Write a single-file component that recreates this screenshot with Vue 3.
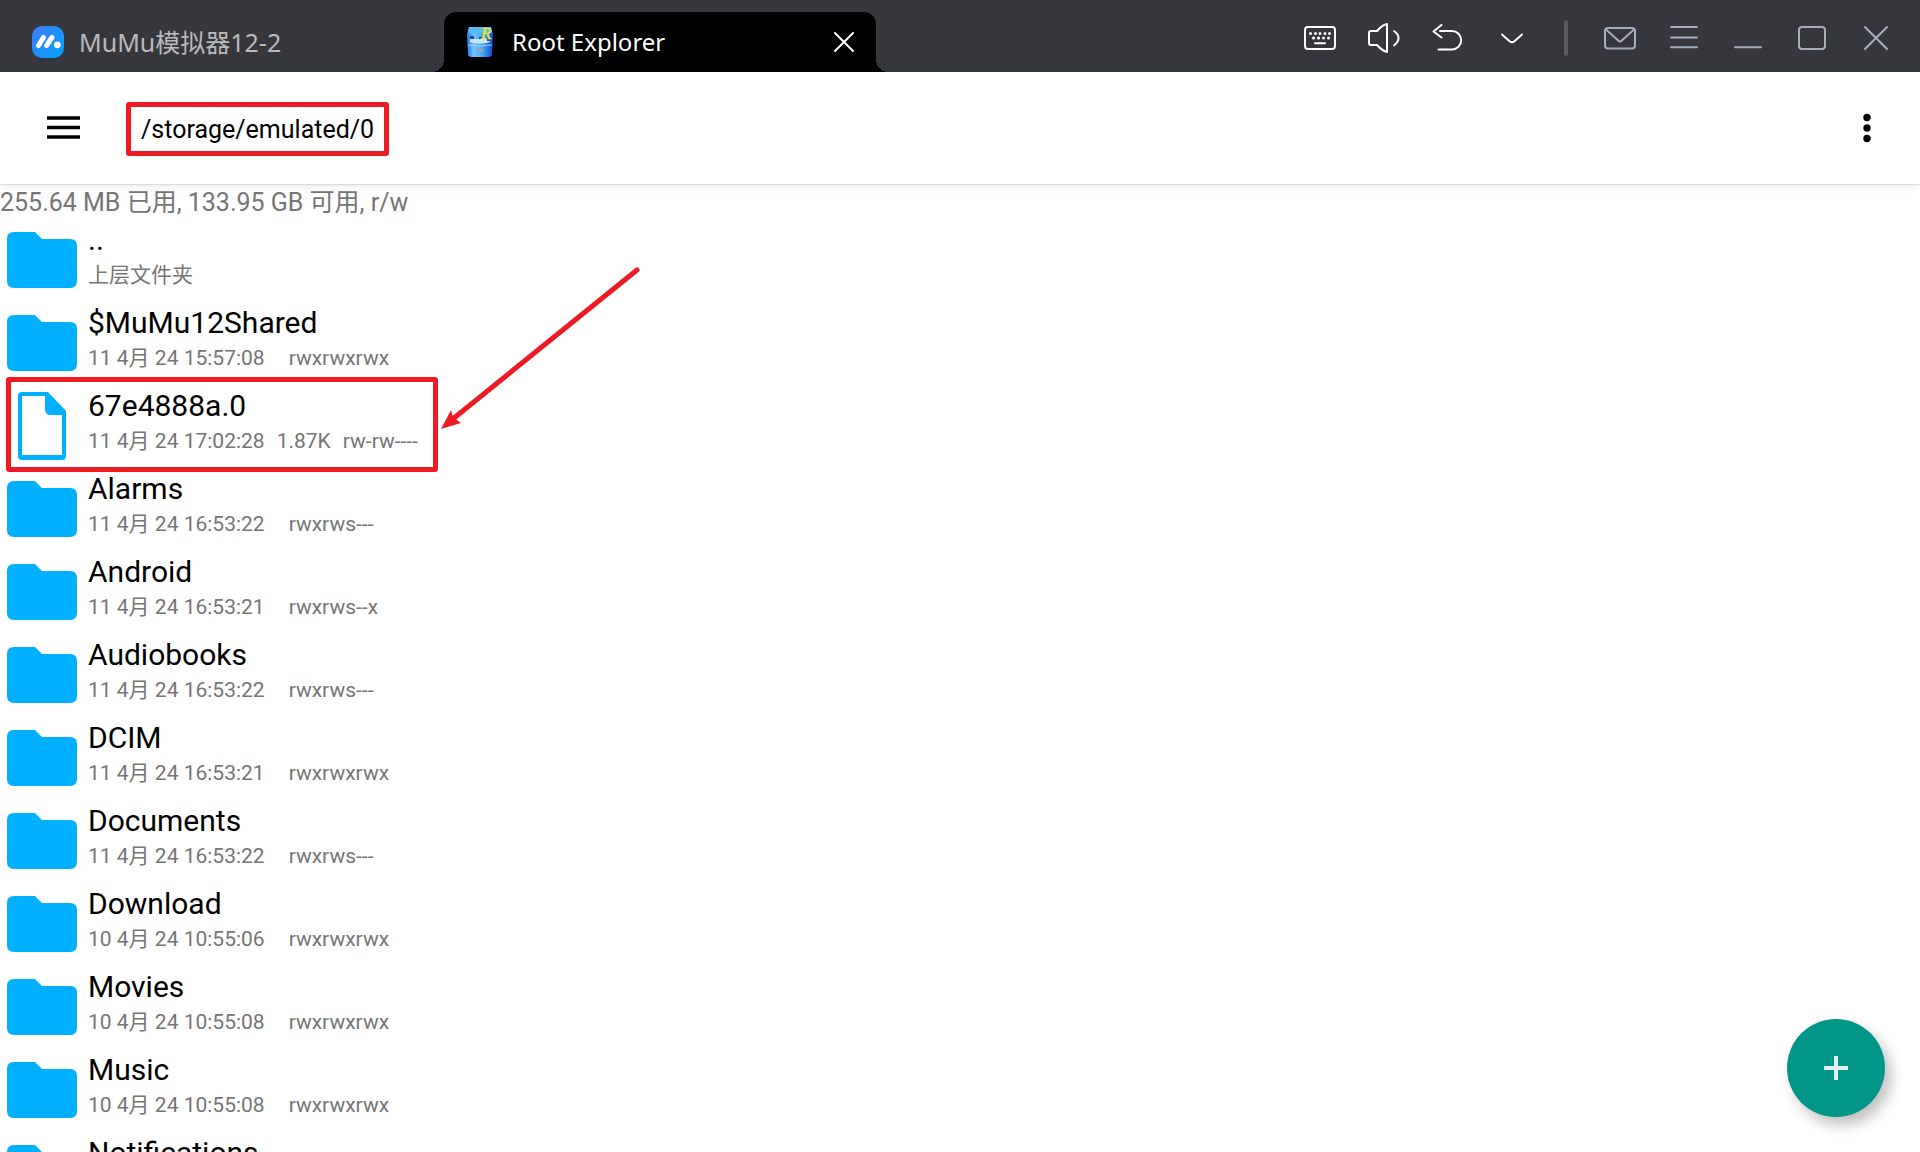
<script setup>
const entries = [
  { name: '..', note: '上层文件夹' },
  { name: '$MuMu12Shared', date: '11 4月 24 15:57:08', mode: 'rwxrwxrwx' },
  { name: '67e4888a.0', date: '11 4月 24 17:02:28', size: '1.87K', mode: 'rw-rw----', file: true },
  { name: 'Alarms', date: '11 4月 24 16:53:22', mode: 'rwxrws---' },
  { name: 'Android', date: '11 4月 24 16:53:21', mode: 'rwxrws--x' },
  { name: 'Audiobooks', date: '11 4月 24 16:53:22', mode: 'rwxrws---' },
  { name: 'DCIM', date: '11 4月 24 16:53:21', mode: 'rwxrwxrwx' },
  { name: 'Documents', date: '11 4月 24 16:53:22', mode: 'rwxrws---' },
  { name: 'Download', date: '10 4月 24 10:55:06', mode: 'rwxrwxrwx' },
  { name: 'Movies', date: '10 4月 24 10:55:08', mode: 'rwxrwxrwx' },
  { name: 'Music', date: '10 4月 24 10:55:08', mode: 'rwxrwxrwx' },
  { name: 'Notifications', date: '10 4月 24 10:55:08', mode: 'rwxrwxrwx' },
]
</script>

<template>
  <div class="window">
    <header class="titlebar">
      <div class="home">
        <svg class="logo" viewBox="0 0 32 32" aria-hidden="true">
          <defs>
            <linearGradient id="logoFill" x1="0" y1="0" x2="1" y2="1">
              <stop offset="0" stop-color="#3f7bff" />
              <stop offset="1" stop-color="#00a2ff" />
            </linearGradient>
          </defs>
          <rect width="32" height="32" rx="10" fill="url(#logoFill)" />
          <path d="M6.500 19.500 L11.500 11.500 M14.500 19.500 L20 11.500" stroke="#fff" stroke-width="5" stroke-linecap="round" />
          <circle cx="25.300" cy="18.800" r="3.400" fill="#fff" />
        </svg>
        <span>MuMu模拟器12-2</span>
      </div>

      <div class="tab">
        <svg class="tab-icon" viewBox="0 0 26 32" aria-hidden="true">
          <defs>
            <linearGradient id="cabinet" x1="0" y1="0" x2="1" y2="0">
              <stop offset="0" stop-color="#1c79e6" />
              <stop offset="0.250" stop-color="#74c4ff" />
              <stop offset="0.600" stop-color="#4aa6f8" />
              <stop offset="1" stop-color="#0a48cf" />
            </linearGradient>
          </defs>
          <path d="M2 1 H24 L26 8 L25 29 Q24 31 20 31 H6 Q2 31 1 29 L0 8 Z" fill="url(#cabinet)" />
          <path d="M2 1 H24 L25 7 H1 Z" fill="#58bdf6" />
          <path d="M3 13 H23 V16 Q13 19 3 16 Z" fill="#c9e6fd" />
          <path d="M3 10 H7 V13 H3 Z M12 11 H16 V13 H12 Z M20 13 H24 V15 H20 Z" fill="#17508f" />
          <path d="M1 19 Q13 21 25 19" stroke="#9ad3ff" stroke-width="1" fill="none" />
          <path d="M11 23 H16 V25 Q13 27 11 25 Z" fill="#a3a3ad" />
          <text x="14" y="13" font-family="Liberation Serif, serif" font-style="italic" font-size="17" fill="#e8e52a" stroke="#e8e52a" stroke-width="0.500">R</text>
        </svg>
        <span class="tab-name">Root Explorer</span>
        <button class="tab-close" aria-label="Close tab">
          <svg viewBox="0 0 20 20"><path d="M1 1 L19 19 M19 1 L1 19" /></svg>
        </button>
      </div>

      <nav class="tools" aria-label="Emulator tools">
        <button aria-label="Keyboard">
          <svg viewBox="0 0 40 40">
            <rect x="5" y="9" width="30" height="22" rx="3" />
            <path class="dots" d="M10.500 15.500h.01M15.500 15.500h.01M20 15.500h.01M25 15.500h.01M29.500 15.500h.01M13.500 20h.01M18.500 20h.01M23.500 20h.01M28.500 20h.01" />
            <path d="M15 25.200 H25" />
          </svg>
        </button>
        <button aria-label="Volume">
          <svg viewBox="0 0 40 40">
            <path d="M23 6 C18 7 15 11 13 13 H7 Q5 13 5 15 V25 Q5 27 7 27 H13 C15 29 18 33 23 34 Z" />
            <path d="M30 13 C36 17 36 23 30 27.500" />
          </svg>
        </button>
        <button aria-label="Back">
          <svg viewBox="0 0 40 40">
            <path d="M13.500 7 L5.500 13.500 L13.500 19.500 M12 13 H24 A9.200 9.200 0 0 1 24 31.400 H10.500" />
          </svg>
        </button>
        <button aria-label="More tools">
          <svg viewBox="0 0 40 40"><path d="M10 16.500 L17.500 23.300 Q20 25.200 22.500 23.300 L30 16.500" /></svg>
        </button>
      </nav>
      <span class="divider"></span>
      <nav class="tools muted" aria-label="Window controls">
        <button aria-label="Messages">
          <svg viewBox="0 0 40 40">
            <rect x="5" y="10" width="30" height="20.500" rx="3" />
            <path d="M6 11.500 L18.500 22.800 Q20 24 21.500 22.800 L34 11.500" />
          </svg>
        </button>
        <button aria-label="Menu">
          <svg viewBox="0 0 40 40"><path d="M7 9 H33 M7 19.500 H33 M7 29.300 H33" /></svg>
        </button>
        <button aria-label="Minimize">
          <svg viewBox="0 0 40 40"><path d="M7 29.300 H33" /></svg>
        </button>
        <button aria-label="Maximize">
          <svg viewBox="0 0 40 40"><rect x="7" y="9" width="26" height="22" rx="3" /></svg>
        </button>
        <button aria-label="Close">
          <svg viewBox="0 0 40 40"><path d="M9 9 L31 31 M31 9 L9 31" /></svg>
        </button>
      </nav>
    </header>

    <div class="appbar">
      <button class="drawer" aria-label="Open navigation">
        <svg viewBox="0 0 33 24"><path d="M0 2 H33 M0 11.500 H33 M0 21 H33" stroke="#000" stroke-width="3.500" /></svg>
      </button>
      <span class="path">/storage/emulated/0</span>
      <button class="overflow" aria-label="More options">
        <svg viewBox="0 0 8 30"><circle cx="4" cy="4.500" r="3.700" /><circle cx="4" cy="15" r="3.700" /><circle cx="4" cy="25.500" r="3.700" /></svg>
      </button>
    </div>

    <main class="browser">
      <p class="usage">255.64 MB 已用, 133.95 GB 可用, r/w</p>
      <ul class="entries">
        <li v-for="entry in entries" :key="entry.name" class="entry">
          <svg v-if="entry.file" class="icon" viewBox="0 0 84 84" aria-hidden="true">
            <path d="M22 8 H48 L66 27 V72 Q66 76 62 76 H22 Q18 76 18 72 V12 Q18 8 22 8 Z" fill="#00b0ff" />
            <path d="M22 12 H45 V25 Q45 31 51 31 H62 V71 H22 Z" fill="#fff" />
          </svg>
          <svg v-else class="icon" viewBox="0 0 84 84" aria-hidden="true">
            <path d="M14 14 H35 L42 21 H70 Q77 21 77 28 V63 Q77 70 70 70 H14 Q7 70 7 63 V21 Q7 14 14 14 Z" fill="#00b0ff" />
          </svg>
          <div class="text">
            <span class="name">{{ entry.name }}</span>
            <span v-if="entry.note" class="meta">{{ entry.note }}</span>
            <span v-else class="meta">
              <span>{{ entry.date }}</span><span class="size">{{ entry.size }}</span><span>{{ entry.mode }}</span>
            </span>
          </div>
          <template v-if="entry.file">
            <span class="highlight"></span>
            <svg class="arrow" viewBox="0 0 204 170" aria-hidden="true">
              <path d="M199 10 L16 158" stroke="#ed1c24" stroke-width="5" stroke-linecap="round" />
              <path d="M3 169 L13 150 L15 157 L23 163 Z" fill="#ed1c24" />
            </svg>
          </template>
        </li>
      </ul>
    </main>

    <button class="fab" aria-label="Add">
      <svg viewBox="0 0 24 24"><path d="M0 12 H24 M12 0 V24" stroke="#e0f3f1" stroke-width="4" /></svg>
    </button>
  </div>
</template>

<style>
body {
  margin: 0;
  background: #fff;
}
</style>

<style scoped>
.window {
  position: relative;
  display: flex;
  flex-direction: column;
  height: 100vh;
  overflow: hidden;
  background: #fff;
  color: #000;
  font-family: Roboto, "Noto Sans CJK SC", sans-serif;
}

button {
  display: flex;
  align-items: center;
  justify-content: center;
  padding: 0;
  border: 0;
  background: none;
}

.titlebar {
  display: flex;
  flex: none;
  align-items: flex-end;
  box-sizing: border-box;
  height: 72px;
  padding-right: 12px;
  background: #36373c;
  font-family: "Noto Sans", "Noto Sans CJK SC", sans-serif;
  font-size: 24px;
  line-height: 32px;
}

.home {
  display: flex;
  align-items: center;
  box-sizing: border-box;
  width: 444px;
  height: 60px;
  padding-left: 32px;
  gap: 15px;
  color: #b9b9bb;
  font-size: 25px;
}

.logo {
  width: 32px;
  height: 32px;
}

.tab {
  position: relative;
  display: flex;
  align-items: center;
  box-sizing: border-box;
  width: 432px;
  height: 60px;
  margin-right: auto;
  padding: 0 16px 0 23px;
  border-radius: 12px 12px 0 0;
  background: #000;
  color: #fff;
}

.tab::before,
.tab::after {
  content: "";
  position: absolute;
  bottom: 0;
  width: 12px;
  height: 12px;
}

.tab::before {
  right: 100%;
  background: radial-gradient(circle at 0 0, transparent 12px, #000 12px);
}

.tab::after {
  left: 100%;
  background: radial-gradient(circle at 100% 0, transparent 12px, #000 12px);
}

.tab-icon {
  width: 26px;
  height: 32px;
  margin-right: 19px;
}

.tab-close {
  width: 32px;
  height: 32px;
  margin-left: auto;
}

.tab-close svg {
  width: 20px;
  height: 20px;
  stroke: #fff;
  stroke-width: 2;
  stroke-linecap: round;
}

.tools {
  display: flex;
  color: #fff;
}

.tools.muted {
  color: #a5adbd;
}

.tools button {
  width: 64px;
  height: 68px;
  color: inherit;
}

.tools svg {
  width: 40px;
  height: 40px;
  fill: none;
  stroke: currentColor;
  stroke-width: 2;
  stroke-linecap: round;
  stroke-linejoin: round;
}

.tools .dots {
  stroke-width: 3;
}

.divider {
  width: 4px;
  height: 36px;
  margin: 0 20px 16px;
  border-radius: 2px;
  background: #5a5b60;
}

.appbar {
  position: relative;
  display: flex;
  flex: none;
  align-items: center;
  height: 112px;
  padding: 0 48px 0 46px;
  background: #fff;
  box-shadow: 0 1px 1px #00000018, 0 3px 8px #00000012;
}

.drawer {
  width: 34px;
  height: 48px;
}

.drawer svg {
  width: 33px;
  height: 24px;
}

.path {
  margin: 2px 0 0 46px;
  padding: 2px 10px 0;
  border: 5px solid #ed1c24;
  border-radius: 3px;
  font-size: 25px;
  line-height: 42px;
}

.overflow {
  width: 10px;
  height: 48px;
  margin-left: auto;
}

.overflow svg {
  width: 8px;
  height: 30px;
}

.browser {
  flex: 1;
  min-height: 0;
}

.usage {
  height: 34px;
  margin: 0;
  color: #757575;
  font-size: 25px;
  line-height: 38px;
}

.entries {
  margin: 0;
  padding: 0;
  list-style: none;
}

.entry {
  position: relative;
  display: flex;
  height: 83px;
}

.icon {
  flex: none;
  width: 84px;
  height: 84px;
}

.text {
  display: flex;
  flex-direction: column;
  padding: 3px 0 0 4px;
}

.name {
  font-size: 30px;
  line-height: 38px;
}

.meta {
  display: flex;
  color: #757575;
  font-size: 21px;
  line-height: 32px;
}

.size {
  margin: 0 12px;
}

.highlight {
  position: absolute;
  top: -7px;
  left: 6px;
  box-sizing: border-box;
  width: 432px;
  height: 95px;
  border: 5px solid #ed1c24;
  border-radius: 3px;
}

.arrow {
  position: absolute;
  bottom: 37px;
  left: 438px;
  width: 204px;
  height: 170px;
}

.fab {
  position: absolute;
  right: 35px;
  bottom: 35px;
  width: 98px;
  height: 98px;
  border-radius: 50%;
  background: #009688;
  box-shadow: 6px 8px 14px #00000040;
}

.fab svg {
  width: 24px;
  height: 24px;
}
</style>
